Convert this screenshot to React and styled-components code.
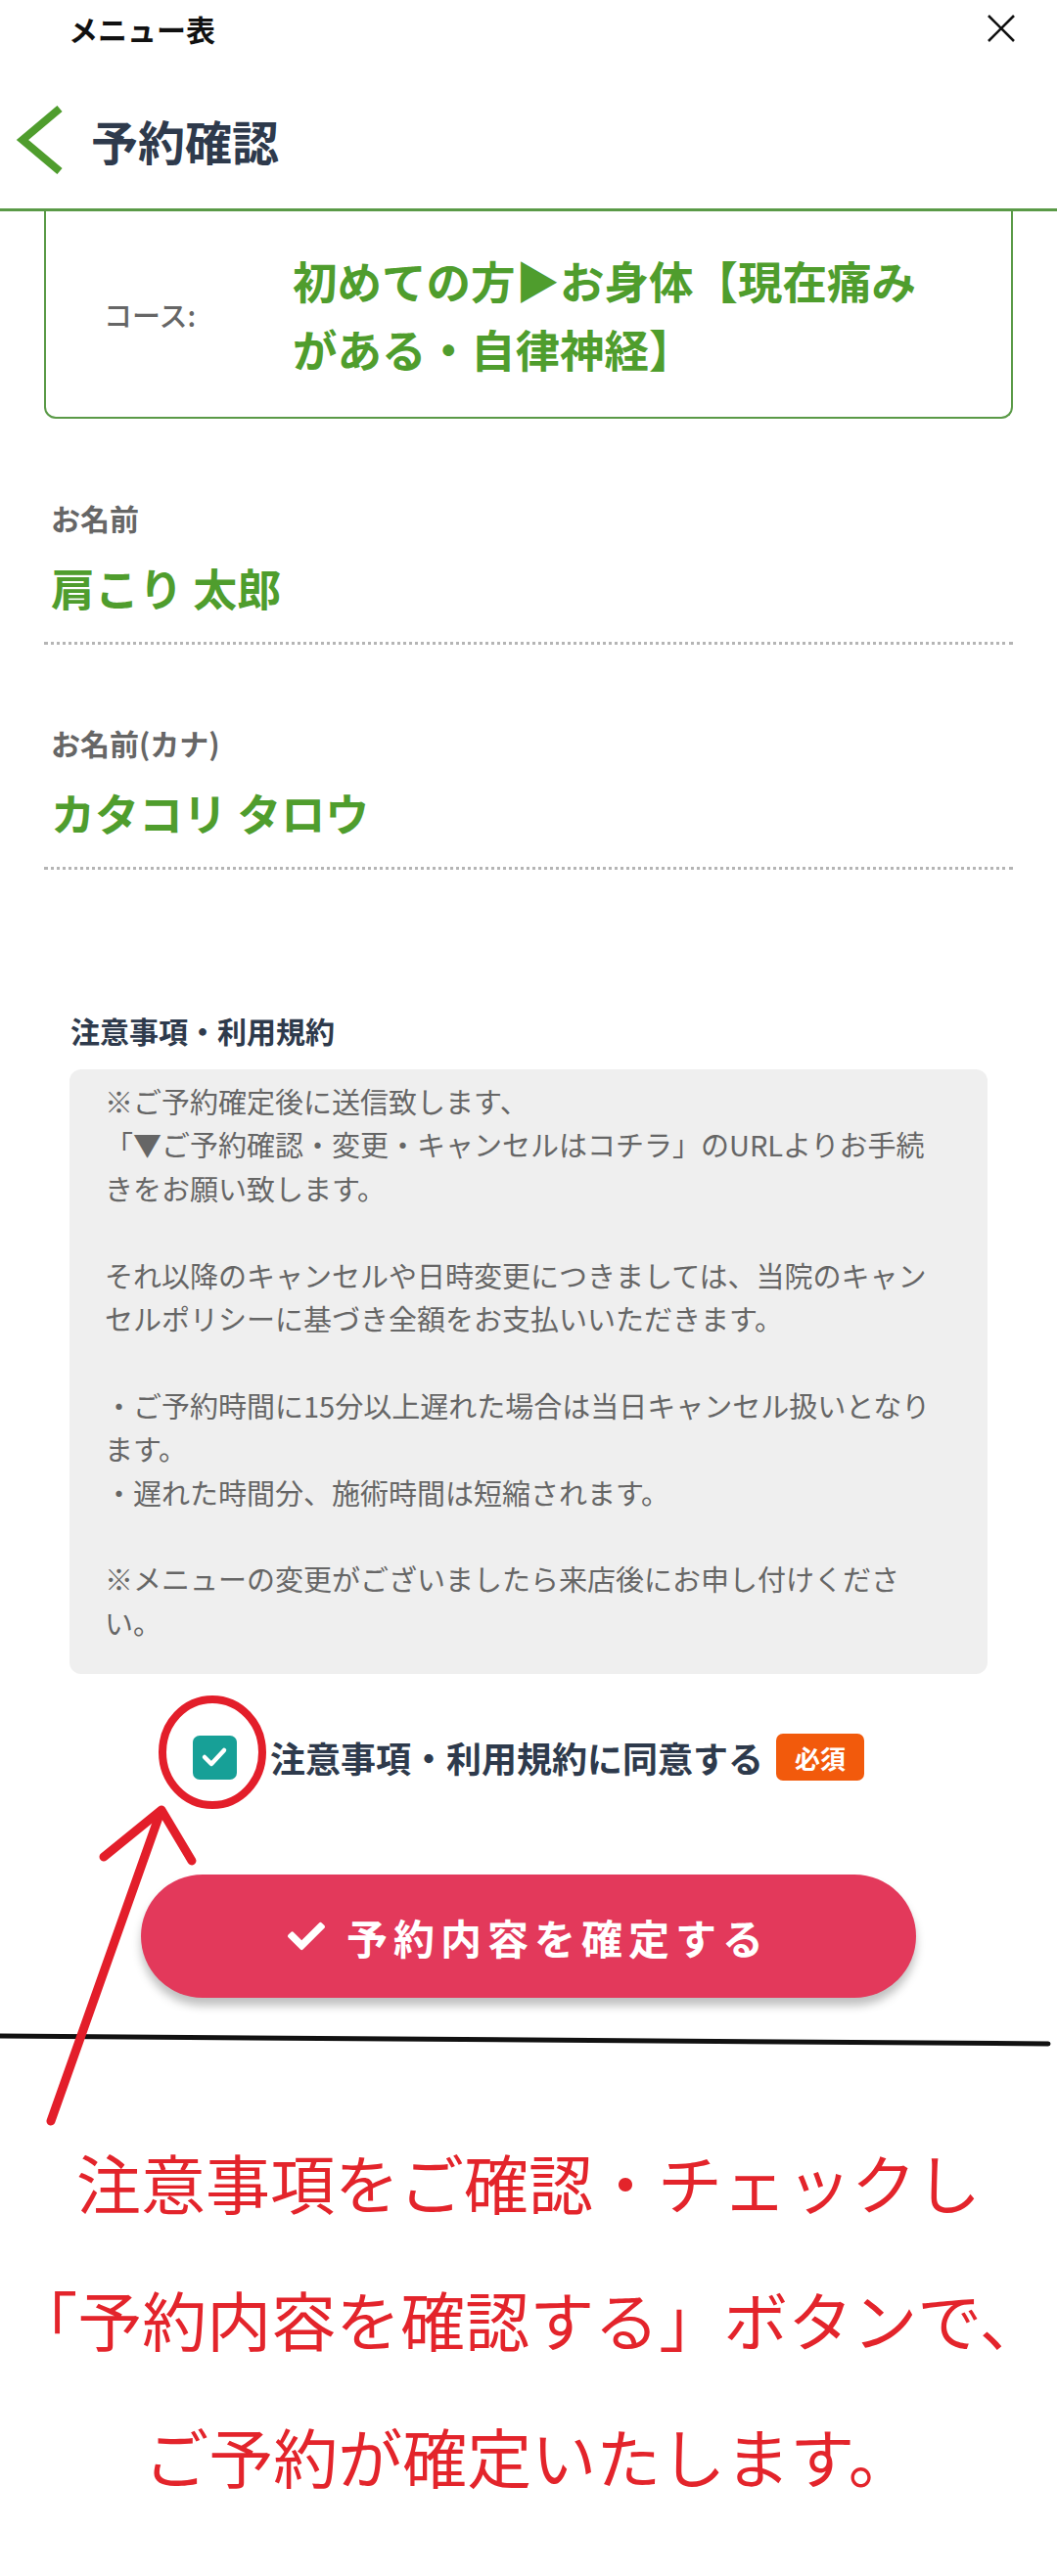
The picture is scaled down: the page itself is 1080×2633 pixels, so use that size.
import React from "react";
import styled, { createGlobalStyle } from "styled-components";
import { FaCheck } from "react-icons/fa";

const GREEN = "#4f9d2d";
const GREEN_LINE = "#5a9a47";
const NAVY = "#2e3a4c";

const GlobalStyle = createGlobalStyle`
    html, body {
        margin: 0;
        padding: 0;
        background: #fff;
    }
    body {
        font-family: "Noto Sans CJK JP", "Noto Sans", sans-serif;
    }
`;

const Page = styled.div`
    position: relative;
    width: 1080px;
    min-height: 2633px;
    overflow: hidden;
    background: #fff;
`;

const Header = styled.header`
    border-bottom: 3px solid ${GREEN_LINE};
`;

const TopBar = styled.div`
    height: 58px;
    display: flex;
    align-items: center;
    justify-content: space-between;
    padding: 0 43px 0 70px;
`;

const MenuTitle = styled.div`
    font-size: 30px;
    font-weight: 700;
    color: #111;
`;

const TitleRow = styled.div`
    box-sizing: border-box;
    height: 155px;
    padding: 15px 0 0 15px;
    display: flex;
    align-items: center;
    gap: 28px;
`;

const Title = styled.h1`
    margin: 0;
    font-size: 48px;
    font-weight: 700;
    color: ${NAVY};
`;

const CourseBox = styled.div`
    margin: 0 45px;
    border: 2px solid ${GREEN_LINE};
    border-top: none;
    border-radius: 0 0 12px 12px;
    padding: 35px 0 35px 59px;
    display: flex;
    align-items: center;
`;

const CourseLabel = styled.div`
    width: 193px;
    flex-shrink: 0;
    font-size: 29px;
    font-weight: 500;
    color: #666;
`;

const CourseValue = styled.div`
    width: 690px;
    font-size: 45.5px;
    line-height: 70px;
    font-weight: 700;
    color: ${GREEN};
`;

const Field = styled.div`
    margin: 0 45px;
    padding: ${(p) => p.$top}px 0 25px 7px;
    border-bottom: 3px dotted #b5b5b5;
`;

const FieldLabel = styled.div`
    font-size: 30px;
    line-height: 40px;
    font-weight: 700;
    color: #666;
`;

const FieldValue = styled.div`
    margin-top: 22px;
    font-size: 45px;
    line-height: 60px;
    font-weight: 700;
    color: ${GREEN};
`;

const Terms = styled.section`
    margin: 144px 71px 0;
`;

const TermsTitle = styled.h2`
    margin: 0 0 20px 1px;
    font-size: 30px;
    line-height: 40px;
    font-weight: 700;
    color: ${NAVY};
`;

const TermsBox = styled.div`
    background: #efefef;
    border-radius: 12px;
    padding: 10px 36px 31px;
    font-size: 29px;
    line-height: 44.4px;
    color: #666;
    white-space: pre;
`;

const AgreeRow = styled.label`
    margin-top: 60px;
    height: 50px;
    display: flex;
    align-items: center;
    justify-content: center;
`;

const CheckBox = styled.span`
    width: 45px;
    height: 45px;
    border-radius: 7px;
    background: #17a097;
    display: flex;
    align-items: center;
    justify-content: center;
    margin-right: 34px;
`;

const AgreeText = styled.span`
    font-size: 36px;
    font-weight: 700;
    color: ${NAVY};
`;

const Badge = styled.span`
    margin-left: 13px;
    width: 90px;
    height: 48px;
    border-radius: 7px;
    background: #f25a0c;
    color: #fff;
    font-size: 26px;
    font-weight: 700;
    display: flex;
    align-items: center;
    justify-content: center;
`;

const ConfirmButton = styled.button`
    display: flex;
    align-items: center;
    justify-content: center;
    gap: 22px;
    width: 792px;
    height: 126px;
    margin: 95px auto 0;
    padding: 0;
    border: none;
    border-radius: 63px;
    background: #e3395b;
    box-shadow: 0 8px 10px rgba(0, 0, 0, 0.25);
    color: #fff;
    font-family: inherit;
    font-size: 42px;
    font-weight: 700;
    letter-spacing: 6px;
    cursor: pointer;
`;

const Caption = styled.div`
    margin-top: 117px;
    text-align: center;
    white-space: nowrap;
    font-size: 66px;
    line-height: 140px;
    font-weight: 400;
    color: #e3242b;
`;

const Overlay = styled.svg`
    position: absolute;
    top: 0;
    left: 0;
    pointer-events: none;
`;

const termsText = `※ご予約確定後に送信致します、
「▼ご予約確認・変更・キャンセルはコチラ」のURLよりお手続
きをお願い致します。

それ以降のキャンセルや日時変更につきましては、当院のキャン
セルポリシーに基づき全額をお支払いいただきます。

・ご予約時間に15分以上遅れた場合は当日キャンセル扱いとなり
ます。
・遅れた時間分、施術時間は短縮されます。

※メニューの変更がございましたら来店後にお申し付けくださ
い。`;

const App = () => {
    return (
        <Page>
            <GlobalStyle />
            <Header>
                <TopBar>
                    <MenuTitle>メニュー表</MenuTitle>
                    <svg width="28" height="28" viewBox="0 0 28 28">
                        <path d="M1 1 L27 27 M27 1 L1 27" stroke="#111" strokeWidth="2.6" />
                    </svg>
                </TopBar>
                <TitleRow>
                    <svg width="50" height="70" viewBox="0 0 50 70">
                        <polyline points="46,3 8,35 46,67" fill="none" stroke={GREEN} strokeWidth="8" />
                    </svg>
                    <Title>予約確認</Title>
                </TitleRow>
            </Header>

            <CourseBox>
                <CourseLabel>コース:</CourseLabel>
                <CourseValue>
                    初めての方▶お身体【現在痛み
                    <br />
                    がある・自律神経】
                </CourseValue>
            </CourseBox>

            <Field $top={81}>
                <FieldLabel>お名前</FieldLabel>
                <FieldValue>肩こり 太郎</FieldValue>
            </Field>
            <Field $top={80}>
                <FieldLabel>お名前(カナ)</FieldLabel>
                <FieldValue>カタコリ タロウ</FieldValue>
            </Field>

            <Terms>
                <TermsTitle>注意事項・利用規約</TermsTitle>
                <TermsBox>{termsText}</TermsBox>
            </Terms>

            <AgreeRow>
                <CheckBox>
                    <svg width="34" height="34" viewBox="0 0 34 34">
                        <polyline points="7,17 14,24 27,10" fill="none" stroke="#fff" strokeWidth="4.5" strokeLinecap="round" strokeLinejoin="round" />
                    </svg>
                </CheckBox>
                <AgreeText>注意事項・利用規約に同意する</AgreeText>
                <Badge>必須</Badge>
            </AgreeRow>

            <ConfirmButton>
                <FaCheck size={38} />
                <span>予約内容を確定する</span>
            </ConfirmButton>

            <Caption>
                注意事項をご確認・チェックし
                <br />
                「予約内容を確認する」ボタンで、
                <br />
                ご予約が確定いたします。
            </Caption>

            {/* hand-drawn annotations on top of the screenshot */}
            <Overlay width="1080" height="2633" viewBox="0 0 1080 2633">
                <line x1="0" y1="2081" x2="1071" y2="2089" stroke="#111" strokeWidth="5" strokeLinecap="round" />
                <ellipse cx="217" cy="1791" rx="51" ry="54" fill="none" stroke="#e31e2a" strokeWidth="8" />
                <line x1="52" y1="2168" x2="164" y2="1852" stroke="#e31e2a" strokeWidth="9" strokeLinecap="round" />
                <polyline points="106,1898 165,1850 196,1902" fill="none" stroke="#e31e2a" strokeWidth="9" strokeLinecap="round" strokeLinejoin="round" />
            </Overlay>
        </Page>
    );
};

export default App;
